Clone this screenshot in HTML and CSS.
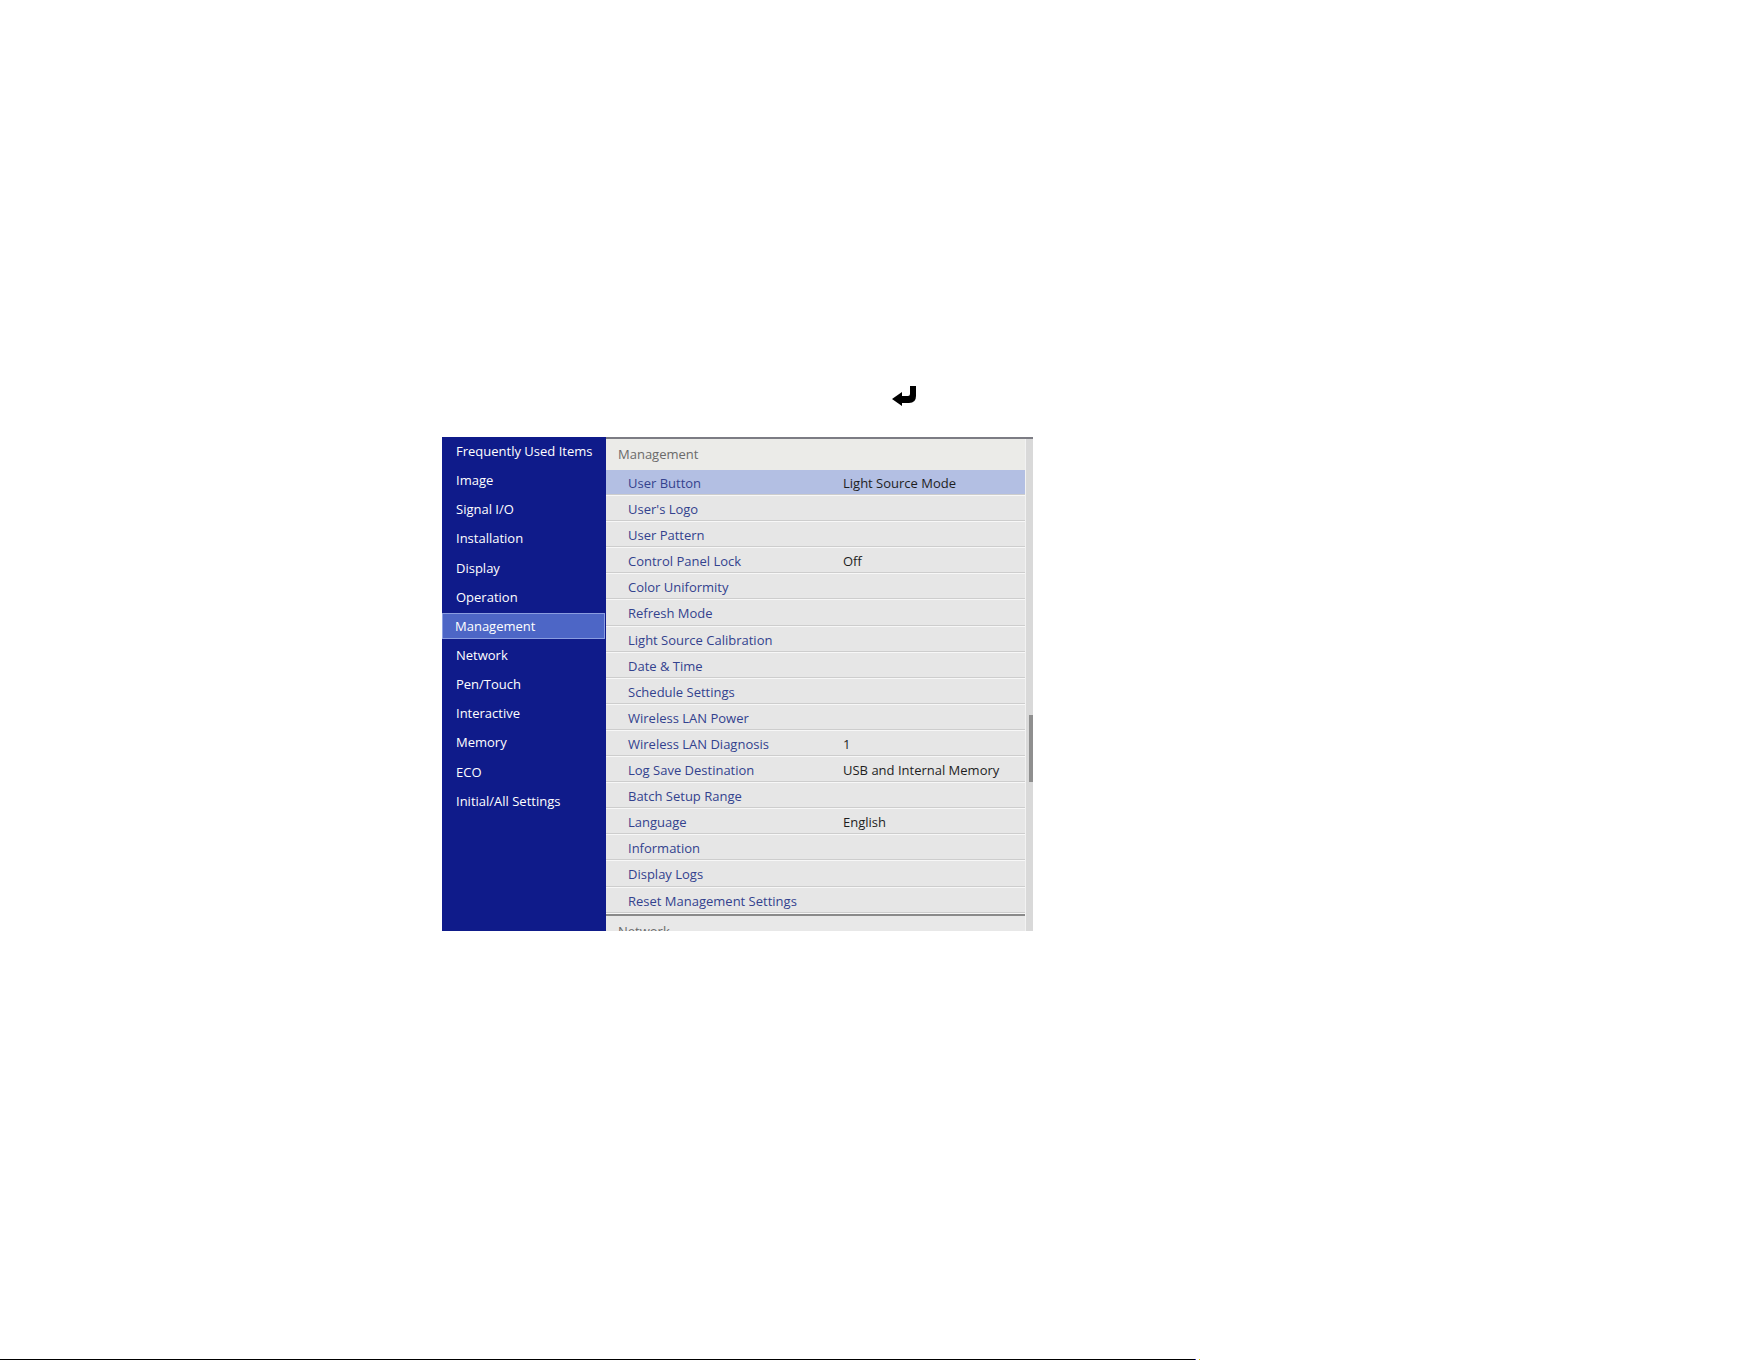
FILE: index.html
```html
<!DOCTYPE html>
<html>
    <head lang="en">
        <meta charset="utf-8">
        <title>Management menu</title>
        <link rel="stylesheet" href="styles.css">
    </head>
    <body>
        <div class="page">
            <div class="keyRow">
                <svg class="enterKey" width="24" height="20" viewBox="0 0 24 20">
                    <path d="M18 0 H24 V10 Q24 17 17 17 H10 V20 L0 13 L10 6 V10 H16 Q18 10 18 8 Z" fill="#000"/>
                </svg>
            </div>

            <section class="osd">
                <nav class="sideMenu">
                    <div class="sideItem">Frequently Used Items</div>
                    <div class="sideItem">Image</div>
                    <div class="sideItem">Signal I/O</div>
                    <div class="sideItem">Installation</div>
                    <div class="sideItem">Display</div>
                    <div class="sideItem">Operation</div>
                    <div class="sideItem active">Management</div>
                    <div class="sideItem">Network</div>
                    <div class="sideItem">Pen/Touch</div>
                    <div class="sideItem">Interactive</div>
                    <div class="sideItem">Memory</div>
                    <div class="sideItem">ECO</div>
                    <div class="sideItem">Initial/All Settings</div>
                </nav>

                <div class="panel">
                    <div class="list">
                        <div class="groupHead">Management</div>
                        <div class="row selected"><span class="label">User Button</span><span class="value">Light Source Mode</span></div>
                        <div class="row"><span class="label">User's Logo</span><span class="value"></span></div>
                        <div class="row"><span class="label">User Pattern</span><span class="value"></span></div>
                        <div class="row"><span class="label">Control Panel Lock</span><span class="value">Off</span></div>
                        <div class="row"><span class="label">Color Uniformity</span><span class="value"></span></div>
                        <div class="row"><span class="label">Refresh Mode</span><span class="value"></span></div>
                        <div class="row"><span class="label">Light Source Calibration</span><span class="value"></span></div>
                        <div class="row"><span class="label">Date &amp; Time</span><span class="value"></span></div>
                        <div class="row"><span class="label">Schedule Settings</span><span class="value"></span></div>
                        <div class="row"><span class="label">Wireless LAN Power</span><span class="value"></span></div>
                        <div class="row"><span class="label">Wireless LAN Diagnosis</span><span class="value">1</span></div>
                        <div class="row"><span class="label">Log Save Destination</span><span class="value">USB and Internal Memory</span></div>
                        <div class="row"><span class="label">Batch Setup Range</span><span class="value"></span></div>
                        <div class="row"><span class="label">Language</span><span class="value">English</span></div>
                        <div class="row"><span class="label">Information</span><span class="value"></span></div>
                        <div class="row"><span class="label">Display Logs</span><span class="value"></span></div>
                        <div class="row"><span class="label">Reset Management Settings</span><span class="value"></span></div>
                        <div class="groupHead next">Network</div>
                    </div>
                    <div class="scrollbar">
                        <div class="thumb"></div>
                    </div>
                </div>
            </section>

            <div class="baseLine">
                <span class="rule"></span>
                <span class="dot blue"></span>
                <span class="dot yellow"></span>
            </div>
        </div>
    </body>
</html>
```

FILE: styles.css
```css
* {
    margin: 0px;
    padding: 0px;
    box-sizing: border-box;
}

body {
    background-color: #fff;
    font-family: "Open Sans", "Noto Sans", sans-serif;
    font-size: 13px;
}

.page {
    height: 1361px;
    display: flex;
    flex-direction: column;
}

/* enter key glyph above the menu */
.keyRow {
    padding: 386px 0 0 892px;
    height: 437px;
}

.enterKey {
    display: block;
}

.osd {
    display: flex;
    margin-left: 442px;
    width: 591px;
    height: 494px;
    overflow: hidden;
}

.sideMenu {
    width: 164px;
    background-color: #0f1b8a;
    padding: 1px 1px 0 1px;
}

.sideItem {
    height: 26px;
    line-height: 26px;
    margin-bottom: 3.15px;
    padding-left: 13px;
    color: #fff;
    white-space: nowrap;
}

.sideItem.active {
    background-color: #4d66c6;
    border: 1px solid #8a9de0;
    line-height: 24px;
    padding-left: 12px;
    margin-left: -1px;
}

.panel {
    flex: 1;
    display: flex;
    background-color: #e6e6e6;
    border-top: 2px solid #7c7c84;
}

.list {
    flex: 1;
    overflow: hidden;
}

.groupHead {
    height: 31px;
    line-height: 30px;
    padding-left: 12px;
    color: #6a6a6a;
    background-color: #ebebe8;
}

.groupHead.next {
    border-top: 2px solid #8a8a8a;
    background-color: #e8e8e8;
}

.row {
    display: grid;
    grid-template-columns: 215px 1fr;
    height: 26.1px;
    line-height: 27px;
    padding-left: 22px;
    border-bottom: 1px solid #f7f7f7;
    box-shadow: inset 0 -2px 0 -1px #cdcdcd;
    white-space: nowrap;
    overflow: hidden;
}

.row .label {
    color: #33428e;
}

.row .value {
    color: #1e1e1e;
}

.row.selected {
    background-color: #b3bfe3;
}

.scrollbar {
    width: 8px;
    background-color: #d9d9d9;
    border-left: 1px solid #f2f2f2;
    display: flex;
    justify-content: flex-end;
    padding-top: 276px;
}

.thumb {
    width: 4px;
    height: 67px;
    background-color: #8f8f8f;
}

.baseLine {
    margin-top: auto;
    margin-bottom: 1px;
    display: flex;
    align-items: center;
    height: 1px;
}

.rule {
    width: 1195px;
    height: 1px;
    background-color: #000;
}

.dot {
    width: 1px;
    height: 1px;
}

.dot.blue {
    background-color: #3030d0;
    margin-right: 3px;
}

.dot.yellow {
    background-color: #e6d400;
}
```
